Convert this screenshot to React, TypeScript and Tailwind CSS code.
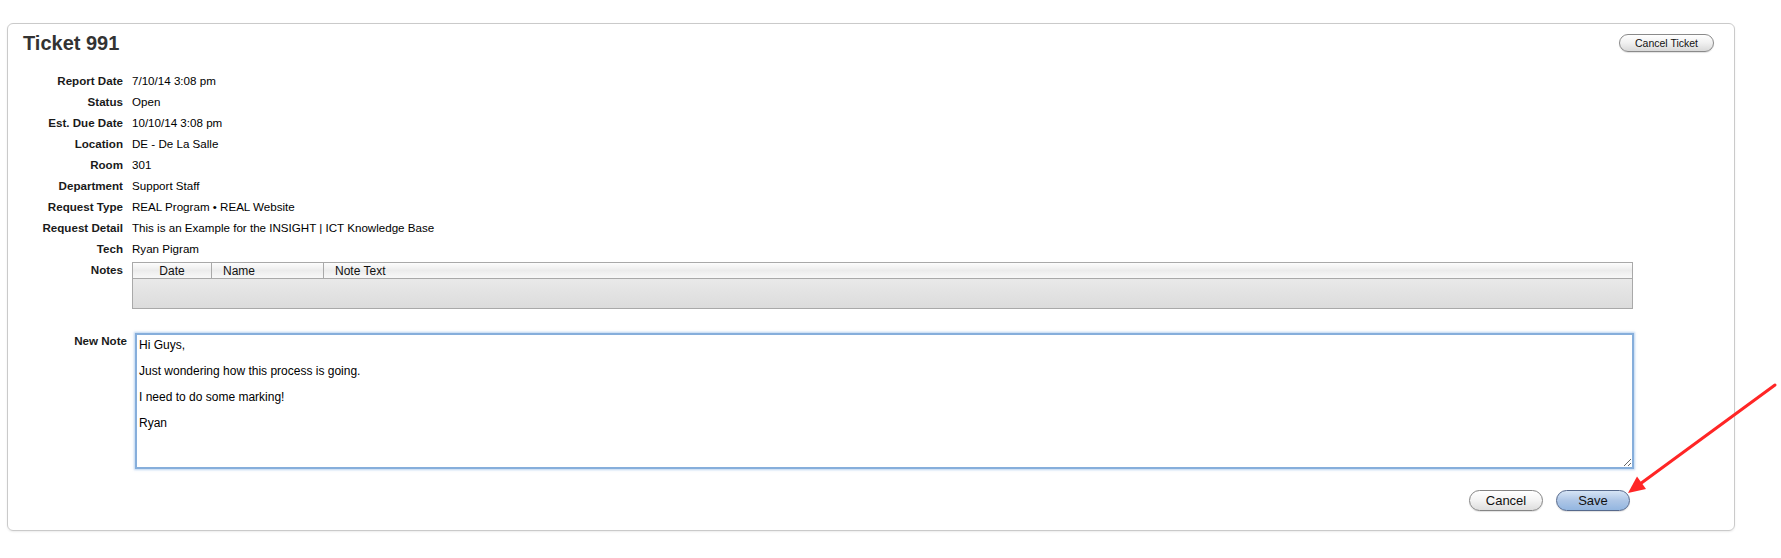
import { useState } from 'react';

const details: [string, string][] = [
  ['Report Date', '7/10/14 3:08 pm'],
  ['Status', 'Open'],
  ['Est. Due Date', '10/10/14 3:08 pm'],
  ['Location', 'DE - De La Salle'],
  ['Room', '301'],
  ['Department', 'Support Staff'],
  ['Request Type', 'REAL Program • REAL Website'],
  ['Request Detail', 'This is an Example for the INSIGHT | ICT Knowledge Base'],
  ['Tech', 'Ryan Pigram'],
];

const pill =
  'rounded-full border text-[#111] leading-none shadow-[0_1px_1px_rgba(0,0,0,0.12)]';

const App = () => {
  const [note, setNote] = useState(
    'Hi Guys,\n\nJust wondering how this process is going.\n\nI need to do some marking!\n\nRyan'
  );

  return (
    <div className="relative h-[558px] w-[1781px] bg-white pl-[7px] pt-[23px] font-['Liberation_Sans',Arial,sans-serif] text-black">
      <div className="h-[508px] w-[1728px] rounded-[6px] border border-[#cacaca] px-[15px] pt-[7px] shadow-[0_1px_2px_rgba(0,0,0,0.08)]">
        <div className="flex h-[24px] items-start justify-between">
          <h1 className="text-[20px] font-bold leading-[24px] text-[#333]">Ticket 991</h1>
          <button
            type="button"
            className={`${pill} mr-[5px] mt-[3px] h-[18px] w-[95px] border-[#8a8a8a] bg-gradient-to-b from-[#ffffff] via-[#f0f0f0] to-[#d9d9d9] text-[10.5px]`}
          >
            Cancel Ticket
          </button>
        </div>

        <div className="mt-[15px] grid grid-cols-[100px_1fr] gap-x-[9px] text-[11.6px] leading-[21px]">
          {details.map(([label, value]) => (
            <div key={label} className="contents">
              <div className="text-right font-bold text-[#1a1a1a]">{label}</div>
              <div>{value}</div>
            </div>
          ))}
          <div className="text-right font-bold text-[#1a1a1a]">Notes</div>
          <div className="pt-[3px]">
            <div className="w-[1501px] border border-[#a9a9a9] text-[12px]">
              <div className="flex h-[16px] border-b border-[#a9a9a9] bg-gradient-to-b from-[#fdfdfd] via-[#ececec] to-[#f8f8f8] leading-[16px] text-[#111]">
                <div className="w-[79px] border-r border-[#a9a9a9] text-center">Date</div>
                <div className="w-[112px] border-r border-[#a9a9a9] pl-[11px]">Name</div>
                <div className="flex-1 pl-[11px]">Note Text</div>
              </div>
              <div className="h-[29px] bg-gradient-to-b from-[#e9e9e9] to-[#dcdcdc]" />
            </div>
          </div>
        </div>

        <div className="mt-[24px] grid grid-cols-[104px_1fr] gap-x-[8px]">
          <div className="pt-[1px] text-right text-[11.6px] font-bold leading-[13px] text-[#1a1a1a]">New Note</div>
          <textarea
            value={note}
            onChange={(e) => setNote(e.target.value)}
            className="h-[136px] w-[1499px] border-[2px] border-[#86aedb] bg-white pl-[2px] pt-[4px] text-[12px] leading-[13px] text-black shadow-[0_0_2px_1px_rgba(133,176,227,0.55)] outline-none"
          />
        </div>

        <div className="mt-[21px] flex w-[1607px] justify-end gap-[13px]">
          <button
            type="button"
            className={`${pill} h-[21px] w-[74px] border-[#858585] bg-gradient-to-b from-[#ffffff] via-[#f3f3f3] to-[#dedede] text-[13px]`}
          >
            Cancel
          </button>
          <button
            type="button"
            className={`${pill} h-[21px] w-[74px] border-[#56698c] bg-gradient-to-b from-[#d6e4f5] via-[#aec6e6] to-[#93b6e0] text-[13px]`}
          >
            Save
          </button>
        </div>
      </div>

      <svg
        className="pointer-events-none absolute left-0 top-0"
        width="1781"
        height="558"
        viewBox="0 0 1781 558"
      >
        <line x1="1775" y1="385" x2="1640" y2="484" stroke="#ff2626" strokeWidth="3" strokeLinecap="round" />
        <polygon points="1628,493 1637,476.5 1646,489" fill="#ff2626" />
      </svg>
    </div>
  );
};

export default App;
